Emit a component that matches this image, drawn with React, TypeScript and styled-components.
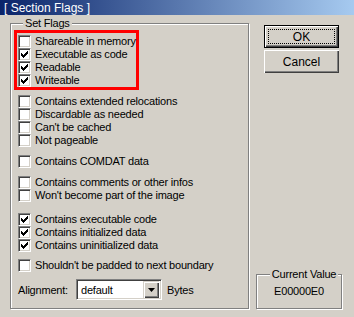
import styled, { createGlobalStyle } from 'styled-components';

interface Flag {
  label: string;
  checked?: boolean;
}

interface FlagGroup {
  gap: number;
  highlight?: boolean;
  flags: Flag[];
}

const groups: FlagGroup[] = [
  {
    gap: 0,
    highlight: true,
    flags: [
      { label: 'Shareable in memory' },
      { label: 'Executable as code', checked: true },
      { label: 'Readable', checked: true },
      { label: 'Writeable', checked: true },
    ],
  },
  {
    gap: 5,
    flags: [
      { label: 'Contains extended relocations' },
      { label: 'Discardable as needed' },
      { label: "Can't be cached" },
      { label: 'Not pageable' },
    ],
  },
  { gap: 8, flags: [{ label: 'Contains COMDAT data' }] },
  {
    gap: 8,
    flags: [{ label: 'Contains comments or other infos' }, { label: "Won't become part of the image" }],
  },
  {
    gap: 11,
    flags: [
      { label: 'Contains executable code', checked: true },
      { label: 'Contains initialized data', checked: true },
      { label: 'Contains uninitialized data', checked: true },
    ],
  },
  { gap: 7, flags: [{ label: "Shouldn't be padded to next boundary" }] },
];

const GlobalStyle = createGlobalStyle`
  body {
    margin: 0;
    background: #d4d0c8;
  }
`;

const Dialog = styled.div`
  width: 354px;
  height: 317px;
  display: flex;
  flex-direction: column;
  background: #d4d0c8;
  font-family: 'Liberation Sans', Arial, sans-serif;
  font-size: 11px;
  letter-spacing: -0.2px;
  color: #000;
`;

const TitleBar = styled.div`
  height: 15px;
  flex: none;
  display: flex;
  align-items: center;
  padding-left: 4px;
  background: linear-gradient(to right, #0a246a, #a6caf0);
  color: #fff;
  font-size: 12px;
  letter-spacing: 0;
`;

const Body = styled.div`
  flex: 1;
  display: flex;
  padding: 2px 0 8px 10px;
`;

const GroupBox = styled.fieldset<{ $width: number }>`
  margin: 0;
  min-width: 0;
  width: ${(p) => p.$width}px;
  box-sizing: border-box;
  border: 1px solid #808080;
  box-shadow: inset 1px 1px 0 #fff, 1px 1px 0 #fff;
`;

const FlagsBox = styled(GroupBox)`
  padding: 0 7px 7px 7px;
`;

const ValueBox = styled(GroupBox)`
  margin-top: auto;
  padding: 4px 0 10px 0;
  text-align: center;
  line-height: 13px;
`;

const Legend = styled.legend`
  margin-left: 5px;
  padding: 0 2px;
  line-height: 13px;
  background: #d4d0c8;
`;

const Group = styled.div<{ $gap: number }>`
  display: flex;
  flex-direction: column;
  margin-top: ${(p) => p.$gap}px;
`;

const Highlight = styled.div`
  display: flex;
  flex-direction: column;
  width: 125px;
  box-sizing: border-box;
  margin-left: -4px;
  padding: 2px 0 0 1px;
  height: 60px;
  border: 3px solid #ff0000;
`;

const Row = styled.label`
  display: flex;
  align-items: center;
  gap: 4px;
  height: 13px;
  line-height: 13px;
  white-space: nowrap;
`;

const Box = styled.span`
  width: 13px;
  height: 13px;
  flex: none;
  box-sizing: border-box;
  background: #fff;
  border: 1px solid;
  border-color: #808080 #fff #fff #808080;
  box-shadow: inset 1px 1px 0 #404040, inset -1px -1px 0 #d4d0c8;

  svg {
    display: block;
  }
`;

const AlignRow = styled.div`
  display: flex;
  align-items: center;
  height: 21px;
  margin-top: 7px;
`;

const AlignLabel = styled.span`
  width: 58px;
`;

const Combo = styled.div`
  width: 86px;
  height: 21px;
  box-sizing: border-box;
  display: flex;
  align-items: center;
  padding: 2px;
  background: #fff;
  border: 1px solid;
  border-color: #808080 #fff #fff #808080;
  box-shadow: inset 1px 1px 0 #404040, inset -1px -1px 0 #d4d0c8;
`;

const ComboText = styled.span`
  flex: 1;
  padding-left: 2px;
`;

const ComboButton = styled.span`
  width: 16px;
  height: 17px;
  display: flex;
  align-items: center;
  justify-content: center;
  background: #d4d0c8;
  box-shadow: inset 1px 1px 0 #d4d0c8, inset 2px 2px 0 #fff, inset -1px -1px 0 #404040, inset -2px -2px 0 #808080;
`;

const Bytes = styled.span`
  margin-left: 5px;
`;

const Side = styled.div`
  width: 86px;
  margin-left: 7px;
  display: flex;
  flex-direction: column;
`;

const Button = styled.div<{ $default?: boolean }>`
  position: relative;
  width: 75px;
  height: 23px;
  margin-left: 8px;
  margin-top: ${(p) => (p.$default ? 8 : 2)}px;
  box-sizing: border-box;
  display: flex;
  align-items: center;
  justify-content: center;
  border: ${(p) => (p.$default ? '1px solid #000' : 'none')};
  box-shadow: inset 1px 1px 0 #fff, inset -1px -1px 0 #404040, inset -2px -2px 0 #808080;
  font-size: 12px;
  letter-spacing: 0;

  ${(p) =>
    p.$default &&
    `
    &::after {
      content: '';
      position: absolute;
      inset: 3px;
      border: 1px dotted #000;
    }
  `}
`;

const Check = () => (
  <svg width="11" height="11" viewBox="0 0 11 11">
    <path
      fill="#000"
      d="M2 4h1v3h-1z M3 5h1v3h-1z M4 6h1v3h-1z M5 5h1v3h-1z M6 4h1v3h-1z M7 3h1v3h-1z M8 2h1v3h-1z"
    />
  </svg>
);

const FlagRow = ({ label, checked }: Flag) => (
  <Row>
    <Box>{checked && <Check />}</Box>
    {label}
  </Row>
);

const App = () => {
  return (
    <Dialog>
      <GlobalStyle />
      <TitleBar>[ Section Flags ]</TitleBar>
      <Body>
        <FlagsBox $width={239}>
          <Legend>Set Flags</Legend>
          {groups.map((group, index) => {
            const rows = group.flags.map((flag) => <FlagRow key={flag.label} {...flag} />);
            return group.highlight ? (
              <Highlight key={index}>{rows}</Highlight>
            ) : (
              <Group key={index} $gap={group.gap}>
                {rows}
              </Group>
            );
          })}
          <AlignRow>
            <AlignLabel>Alignment:</AlignLabel>
            <Combo>
              <ComboText>default</ComboText>
              <ComboButton>
                <svg width="7" height="4" viewBox="0 0 7 4">
                  <path fill="#000" d="M0 0h7l-3.5 4z" />
                </svg>
              </ComboButton>
            </Combo>
            <Bytes>Bytes</Bytes>
          </AlignRow>
        </FlagsBox>
        <Side>
          <Button $default>OK</Button>
          <Button>Cancel</Button>
          <ValueBox $width={86}>
            <Legend>Current Value</Legend>
            E00000E0
          </ValueBox>
        </Side>
      </Body>
    </Dialog>
  );
};

export default App;
